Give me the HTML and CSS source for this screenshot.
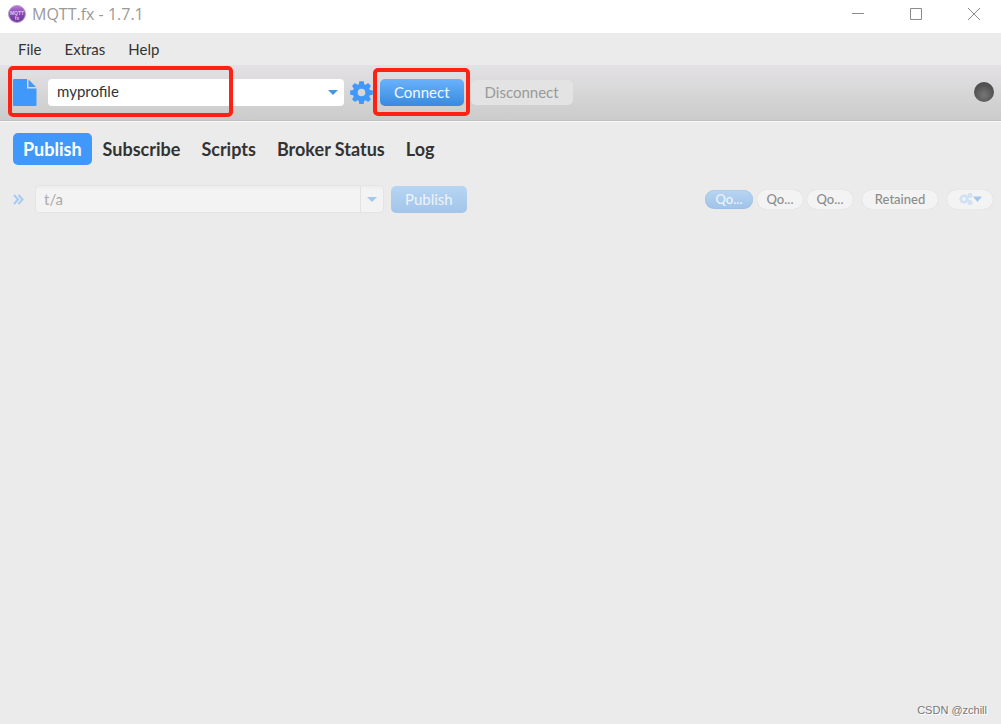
FILE: index.html
```
<!DOCTYPE html>
<html lang="en">
<head>
  <meta charset="UTF-8">
  <meta name="viewport" content="width=device-width, initial-scale=1.0">
  <title>MQTT.fx - 1.7.1</title>
  <link rel="stylesheet" href="styles.css">
</head>
<body>
  <!-- Window title bar -->
  <header class="titlebar">
    <svg class="app-icon" viewBox="0 0 18 18" aria-hidden="true">
      <defs>
        <linearGradient id="ball" x1="0" y1="0" x2="0" y2="1">
          <stop offset="0" stop-color="#b877dc"/>
          <stop offset="0.45" stop-color="#8a48b4"/>
          <stop offset="1" stop-color="#6d3a96"/>
        </linearGradient>
      </defs>
      <circle cx="9" cy="9" r="8.5" fill="url(#ball)" stroke="#b9a3c9"/>
      <text x="9" y="10" text-anchor="middle" class="app-icon-text">MQTT</text>
      <text x="9" y="15" text-anchor="middle" class="app-icon-text">fx</text>
    </svg>
    <span class="title">MQTT.fx - 1.7.1</span>
    <div class="window-buttons">
      <button class="window-button" aria-label="Minimize">
        <svg width="12" height="12" viewBox="0 0 12 12"><path d="M0 5.500h12"/></svg>
      </button>
      <button class="window-button" aria-label="Maximize">
        <svg width="12" height="12" viewBox="0 0 12 12"><path d="M.5.5h11v11H.5z"/></svg>
      </button>
      <button class="window-button" aria-label="Close">
        <svg width="12" height="12" viewBox="0 0 12 12"><path d="M0 0l12 12M12 0L0 12"/></svg>
      </button>
    </div>
  </header>

  <nav class="menubar">
    <button class="menu">File</button>
    <button class="menu">Extras</button>
    <button class="menu">Help</button>
  </nav>

  <!-- Connection toolbar -->
  <div class="toolbar">
    <div class="profile">
      <svg class="file-icon" width="24" height="27" viewBox="0 0 24 27" aria-hidden="true">
        <path d="M1 0h13v9.500h9.500V26a1 1 0 0 1-1 1H1a1 1 0 0 1-1-1V1a1 1 0 0 1 1-1z"/>
        <path d="M15.500 0.500L23 8h-7.500z"/>
      </svg>
      <div class="select-box">
        <select class="profile-select" aria-label="Connection profile">
          <option>myprofile</option>
        </select>
        <svg class="arrow select-arrow" width="10" height="5" viewBox="0 0 10 5"><path d="M0 0h10L5 5z"/></svg>
      </div>
      <div class="mark mark-profile"></div>
    </div>
    <button class="gear" aria-label="Settings">
      <svg width="23" height="23" viewBox="0 0 24 24">
        <path fill-rule="evenodd" d="M9.700 0.300h4.600l.5 3.100 1.500.6 2.600-1.800 3 3-1.800 2.600.6 1.500 3.100.5v4.600l-3.100.5-.6 1.500 1.800 2.600-3 3-2.600-1.800-1.500.6-.5 3.100H9.700l-.5-3.100-1.500-.6-2.600 1.800-3-3 1.800-2.600-.6-1.500-3.100-.5V9.800l3.100-.5.6-1.500-1.800-2.600 3-3L7.700 4l1.500-.6zM12 8a4 4 0 1 0 0 8 4 4 0 0 0 0-8z"/>
      </svg>
    </button>
    <div class="connect-box">
      <button class="button primary">Connect</button>
      <div class="mark mark-connect"></div>
    </div>
    <button class="button disconnect" disabled>Disconnect</button>
    <span class="lamp"></span>
  </div>

  <main>
    <div class="tabs" role="tablist">
      <button class="tab active" role="tab" aria-selected="true">Publish</button>
      <button class="tab" role="tab">Subscribe</button>
      <button class="tab" role="tab">Scripts</button>
      <button class="tab" role="tab">Broker Status</button>
      <button class="tab" role="tab">Log</button>
    </div>

    <div class="publish-row">
      <svg class="chevrons" width="11" height="11" viewBox="0 0 11 11" aria-hidden="true"><path d="M1 1l4 4.500-4 4.500M5.500 1l4 4.500-4 4.500"/></svg>
      <div class="topic">
        <input class="topic-input" type="text" value="t/a" aria-label="Topic" disabled>
        <button class="topic-button" aria-label="Recent topics" disabled>
          <svg class="arrow pale" width="10" height="5" viewBox="0 0 10 5"><path d="M0 0h10L5 5z"/></svg>
        </button>
      </div>
      <button class="button primary" disabled>Publish</button>

      <div class="options">
        <div class="qos">
          <button class="pill selected" disabled>Qo...</button>
          <button class="pill" disabled>Qo...</button>
          <button class="pill" disabled>Qo...</button>
        </div>
        <button class="pill retained" disabled>Retained</button>
        <button class="pill" aria-label="Publish options" disabled>
          <svg width="24" height="14" viewBox="0 0 24 14">
            <g class="cogs">
              <circle cx="6" cy="7" r="3"/>
              <circle class="teeth" cx="6" cy="7" r="4.300"/>
              <circle cx="12" cy="3.500" r="1.500"/>
              <circle cx="12" cy="10.500" r="1.500"/>
            </g>
            <path class="cog-arrow" d="M15 4.500h9L19.500 10z"/>
          </svg>
        </button>
      </div>
    </div>
  </main>

  <footer class="credit">CSDN @zchill</footer>
</body>
</html>
```
FILE: styles.css
```
* {
  box-sizing: border-box;
}
body {
  margin: 0;
  min-height: 100vh;
  display: flex;
  flex-direction: column;
  background-color: #ebebeb;
  color: #333;
  font-family: Lato, sans-serif;
  font-size: 15px;
}
button, input, select {
  font: inherit;
  color: inherit;
  margin: 0;
  padding: 0;
  border: none;
  background: none;
}
svg {
  display: block;
  flex: none;
}

/* title bar */
.titlebar {
  display: flex;
  align-items: center;
  height: 33px;
  padding: 0 15px 5px 8px;
  background-color: white;
  color: #999;
}
.app-icon {
  width: 18px;
  height: 18px;
}
.app-icon-text {
  font: bold 5px "Liberation Sans", sans-serif;
  fill: #dcc2ec;
}
.title {
  margin-left: 6px;
  font-family: "Open Sans", sans-serif;
  font-size: 16px;
}
.window-buttons {
  display: flex;
  gap: 34px;
  margin-left: auto;
}
.window-button {
  padding: 6px;
}
.window-button svg {
  fill: none;
  stroke: #8c8c8c;
}

.menubar {
  display: flex;
  align-items: center;
  gap: 23px;
  height: 32px;
  padding: 0 18px;
}

/* toolbar */
.toolbar {
  display: flex;
  align-items: center;
  height: 57px;
  padding: 0 7px 2px 13px;
  background: linear-gradient(#e3e1e4, #cbcbcb);
  border-bottom: 1px solid #f8f8f8;
  box-shadow: inset 0 -1px #c0c0c0;
}
.profile, .connect-box, .select-box {
  position: relative;
  display: flex;
  align-items: center;
}
.file-icon {
  fill: #4099fa;
}
.select-box {
  margin-left: 11px;
}
.profile-select {
  appearance: none;
  width: 296px;
  height: 27px;
  padding: 0 9px 2px;
  border-radius: 4px;
  background-color: white;
}
.arrow {
  fill: #4796e2;
}
.select-arrow {
  position: absolute;
  right: 6px;
  pointer-events: none;
}
.gear {
  margin: 0 7px 0 6px;
  fill: #4099fa;
}
.button {
  height: 27px;
  padding: 0 14px 1px;
  border-radius: 5px;
}
.primary {
  background: linear-gradient(#6ab2fc, #378ae0);
  color: #f2f8ff;
}
.primary:disabled {
  background: linear-gradient(#b7d5f3, #a3c5e9);
  color: #eef4fb;
}
.disconnect {
  height: 25px;
  margin-left: 7px;
  background: #e3e3e3;
  color: #999;
}
.lamp {
  width: 20px;
  height: 20px;
  margin-left: auto;
  border-radius: 50%;
  background: radial-gradient(circle at 50% 65%, #777, #555 55%, #404040);
}

/* red highlight frames */
.mark {
  position: absolute;
  border: 4px solid #ff2112;
  border-radius: 5px;
  pointer-events: none;
}
.mark-profile {
  left: -5px;
  top: -13px;
  width: 225px;
  height: 51px;
}
.mark-connect {
  inset: -11px -6px -10px -7px;
}

/* tabs */
.tabs {
  display: flex;
  gap: 1px;
  padding: 11px 13px 0;
}
.tab {
  height: 32px;
  padding: 0 10px;
  border-radius: 5px;
  font-size: 18px;
  font-weight: bold;
}
.tab.active {
  background-color: #4099fa;
  color: white;
}

/* publish row */
.publish-row {
  display: flex;
  align-items: center;
  padding: 20px 8px 0 13px;
}
.chevrons {
  fill: none;
  stroke: #a5cbf2;
  stroke-width: 2;
}
.topic {
  display: flex;
  width: 349px;
  height: 28px;
  margin: 0 7px 0 11px;
  border: 1px solid #e4e4e4;
  border-radius: 4px;
  background: linear-gradient(#ededed, #f3f3f3 4px);
  color: #aaa;
}
.topic-input {
  flex: 1;
  min-width: 0;
  padding-left: 8px;
}
.topic-button {
  display: flex;
  align-items: center;
  justify-content: center;
  width: 23px;
  border-left: 1px solid #e2e2e2;
}
.arrow.pale {
  fill: #a3c8ee;
}
.options {
  display: flex;
  gap: 9px;
  margin-left: auto;
}
.qos {
  display: flex;
  gap: 4px;
}
.pill {
  display: flex;
  align-items: center;
  justify-content: center;
  width: 46px;
  height: 19px;
  border-radius: 10px;
  background-color: #f3f3f3;
  box-shadow: 0 0 1px #ccc;
  color: #8c8c8c;
  font-size: 13px;
  font-weight: 500;
}
.pill.selected {
  width: 48px;
  background: linear-gradient(#b7d5f3, #a0c3e8);
  box-shadow: inset 0 0 1px #7fa3c8;
  color: #eef4fb;
}
.pill.retained {
  width: 76px;
}
.cogs {
  fill: none;
  stroke: #cfe0f2;
  stroke-width: 2;
}
.teeth {
  stroke-dasharray: 2 1;
  stroke-width: 1;
}
.cog-arrow {
  fill: #a3c8ee;
}

.credit {
  margin-top: auto;
  padding: 0 14px 7px;
  text-align: right;
  font-family: "Liberation Sans", sans-serif;
  font-size: 11px;
  line-height: 14px;
  color: #777;
  text-shadow: 1px 1px white;
}
```
